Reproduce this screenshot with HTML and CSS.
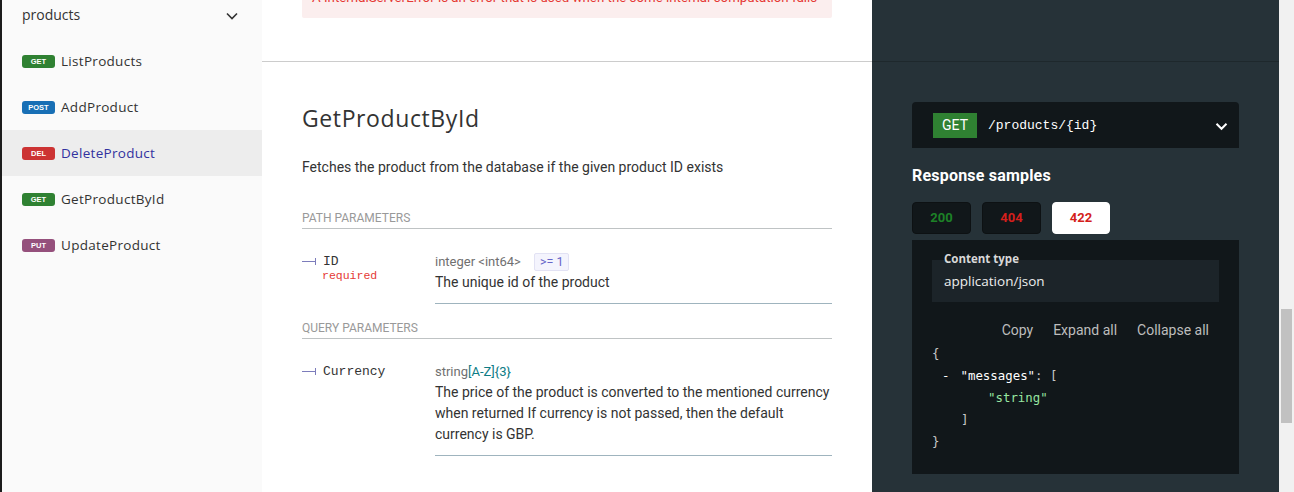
FILE: index.html
```html
<!DOCTYPE html>
<html lang="en">
<head>
<meta charset="utf-8">
<title>GetProductById</title>
<link rel="stylesheet" href="styles.css">
</head>
<body>
<div class="app">
  <nav class="sidebar">
    <div class="menu-cat">
      <span class="cat-label">products</span>
      <svg class="cat-chev" width="12" height="8" viewBox="0 0 12 8"><path d="M1 1.5 L6 6.5 L11 1.5" fill="none" stroke="#333" stroke-width="1.6"/></svg>
    </div>
    <ul class="menu">
      <li class="menu-item"><span class="badge get">get</span><span class="menu-label">ListProducts</span></li>
      <li class="menu-item"><span class="badge post">post</span><span class="menu-label">AddProduct</span></li>
      <li class="menu-item active"><span class="badge del">del</span><span class="menu-label">DeleteProduct</span></li>
      <li class="menu-item"><span class="badge get">get</span><span class="menu-label">GetProductById</span></li>
      <li class="menu-item"><span class="badge put">put</span><span class="menu-label">UpdateProduct</span></li>
    </ul>
  </nav>

  <main class="content">
    <section class="row row-prev">
      <div class="middle">
        <div class="error-box">A InternalServerError is an error that is used when the some internal computation fails</div>
      </div>
      <div class="right"></div>
    </section>

    <section class="row row-op">
      <div class="middle">
        <h2 class="op-title">GetProductById</h2>
        <p class="op-desc">Fetches the product from the database if the given product ID exists</p>

        <div class="params-header">Path Parameters</div>
        <div class="param">
          <div class="param-name">
            <div class="name-line"><span class="tree"></span><span class="pname">ID</span></div>
            <div class="required">required</div>
          </div>
          <div class="param-info">
            <div class="type-line"><span class="ptype">integer &lt;int64&gt;</span><span class="constraint">&gt;= 1</span></div>
            <div class="pdesc">The unique id of the product</div>
          </div>
        </div>

        <div class="params-header second">Query Parameters</div>
        <div class="param">
          <div class="param-name">
            <div class="name-line"><span class="tree"></span><span class="pname">Currency</span></div>
          </div>
          <div class="param-info">
            <div class="type-line"><span class="ptype">string</span><span class="pattern">[A-Z]{3}</span></div>
            <div class="pdesc">The price of the product is converted to the mentioned currency when returned If currency is not passed, then the default currency is GBP.</div>
          </div>
        </div>
      </div>

      <div class="right">
        <div class="endpoint">
          <span class="http-verb">GET</span>
          <span class="path">/products/{id}</span>
          <svg class="ep-chev" width="13" height="9" viewBox="0 0 13 9"><path d="M1.5 1.8 L6.5 6.8 L11.5 1.8" fill="none" stroke="#fff" stroke-width="2"/></svg>
        </div>
        <h3 class="samples-title">Response samples</h3>
        <div class="tabs">
          <span class="tab ok">200</span>
          <span class="tab err">404</span>
          <span class="tab err selected">422</span>
        </div>
        <div class="sample-panel">
          <div class="ctype">
            <div class="ctype-label">Content type</div>
            <div class="ctype-value">application/json</div>
          </div>
          <div class="actions">
            <span class="action">Copy</span>
            <span class="action">Expand all</span>
            <span class="action">Collapse all</span>
          </div>
          <div class="json">
            <div class="jl"><span class="punct">{</span></div>
            <div class="jl ind1"><span class="collapser">-</span><span class="key">"messages"</span><span class="punct">: [</span></div>
            <div class="jl ind2"><span class="str">"string"</span></div>
            <div class="jl ind3"><span class="punct">]</span></div>
            <div class="jl"><span class="punct">}</span></div>
          </div>
        </div>
      </div>
    </section>
  </main>

  <div class="scrollbar"><div class="thumb"></div></div>
</div>
</body>
</html>
```

FILE: styles.css
```css
* { box-sizing: border-box; }
html, body { margin: 0; padding: 0; }
body {
  width: 1294px;
  height: 492px;
  overflow: hidden;
  font-family: Roboto, "Liberation Sans", sans-serif;
  color: #333;
  background: #fff;
}
.app {
  display: flex;
  height: 492px;
}

/* Sidebar */
.sidebar {
  width: 262px;
  flex: none;
  background: #fafafa;
  border-left: 2px solid #1c1c1c;
  font-family: "Open Sans", sans-serif;
}
.menu-cat {
  height: 38px;
  display: flex;
  align-items: flex-start;
  justify-content: space-between;
  padding: 5px 24px 0 20px;
}
.cat-label {
  font-size: 14px;
  line-height: 20px;
  color: #333;
}
.cat-chev { margin-top: 7px; }
.menu { list-style: none; margin: 0; padding: 0; }
.menu-item {
  height: 46px;
  display: flex;
  align-items: center;
  padding-left: 20px;
}
.menu-item.active { background: #ededed; }
.menu-item.active .menu-label { color: #32329f; }
.badge {
  width: 33px;
  height: 13px;
  border-radius: 3px;
  color: #fff;
  font-family: "Liberation Sans", Arial, sans-serif;
  font-weight: bold;
  font-size: 7.5px;
  line-height: 13px;
  text-align: center;
  text-transform: uppercase;
  margin-right: 6px;
  margin-top: 1px;
}
.badge.get { background: #2f8132; }
.badge.post { background: #186fb5; }
.badge.del { background: #cc3333; }
.badge.put { background: #95507c; }
.menu-label {
  font-size: 13.5px;
  letter-spacing: 0.3px;
  line-height: 20px;
  color: #333;
}

/* Content */
.content {
  width: 1017px;
  flex: none;
  display: flex;
  flex-direction: column;
}
.row {
  display: grid;
  grid-template-columns: 610px 407px;
}
.row-prev {
  height: 62px;
}
.row-prev .middle,
.row-prev .right {
  border-bottom: 1px solid rgba(0, 0, 0, 0.2);
}
.row-op { flex: 1; }
.middle { padding: 0 40px; }
.right { background: #263238; padding: 0 40px; }
.row-prev .middle { overflow: hidden; }

.error-box {
  margin-top: -22px;
  padding: 10px 10px;
  background: #fbeeee;
  border-radius: 2px;
  color: #e53935;
  font-size: 13.3px;
  line-height: 20px;
  white-space: nowrap;
}

.row-op .middle { padding-top: 40px; }
.op-title {
  margin: 0;
  font-family: "Open Sans", sans-serif;
  font-weight: 400;
  font-size: 23px;
  letter-spacing: 0.6px;
  line-height: 32px;
  color: #333;
}
.op-desc {
  margin: 23px 0 0;
  font-size: 14px;
  line-height: 20px;
  color: #333;
}
.params-header {
  margin-top: 33px;
  font-size: 12px;
  line-height: 16px;
  text-transform: uppercase;
  color: #999;
  padding-bottom: 2px;
  border-bottom: 1px solid #bfc3c4;
}
.params-header.second { margin-top: 16px; }
.param {
  display: flex;
}
.param-name {
  width: 133px;
  flex: none;
  padding-top: 23px;
}
.name-line {
  display: flex;
  align-items: center;
  height: 18px;
}
.tree {
  position: relative;
  width: 14px;
  height: 1px;
  background: #7c7cbb;
  margin-right: 7px;
}
.tree::after {
  content: "";
  position: absolute;
  right: 0;
  top: -3px;
  width: 1px;
  height: 7px;
  background: #7c7cbb;
}
.pname {
  font-family: "Liberation Mono", monospace;
  font-size: 13px;
  color: #333;
}
.required {
  margin-left: 20px;
  font-family: "Liberation Mono", monospace;
  font-size: 11.5px;
  line-height: 12px;
  color: #e53935;
}
.param-info {
  flex: 1;
  padding: 23px 0 10px;
  border-bottom: 1px solid #9fb4be;
}
.type-line {
  font-size: 13px;
  line-height: 20px;
  display: flex;
  align-items: center;
}
.ptype { color: #707070; }
.constraint {
  margin-left: 13px;
  padding: 0 5px;
  line-height: 16px;
  background: #f4f4fd;
  border: 1px solid #e2e2f4;
  border-radius: 2px;
  color: #6666c9;
  font-size: 12.5px;
}
.pattern { color: #0e7c86; }
.pdesc {
  font-size: 14px;
  line-height: 21px;
  color: #333;
}

/* Right panel */
.row-op .right { padding-top: 40px; }
.endpoint {
  height: 46px;
  background: #11171a;
  border-radius: 4px 4px 0 0;
  display: flex;
  align-items: center;
  padding: 0 11px 0 21px;
}
.http-verb {
  background: #2f8132;
  color: #fff;
  font-size: 14px;
  line-height: 25px;
  padding: 0 9px;
  width: 44px;
  text-align: center;
}
.path {
  margin-left: 11px;
  font-family: "Liberation Mono", monospace;
  font-size: 13px;
  color: #fff;
  flex: 1;
}
.ep-chev { margin-top: 2px; }
.samples-title {
  margin: 18px 0 0;
  color: #fff;
  font-size: 16px;
  font-weight: bold;
  letter-spacing: 0.2px;
  line-height: 20px;
}
.tabs {
  display: flex;
  gap: 11px;
  margin-top: 16px;
}
.tab {
  width: 59px;
  height: 32px;
  border-radius: 4px;
  background: #11171a;
  border: 1px solid #0d1113;
  font-size: 13px;
  font-weight: bold;
  line-height: 30px;
  text-align: center;
}
.tab.ok { color: #1d8127; }
.tab.err { color: #d41f1c; }
.tab.selected { background: #fff; color: #d41f1c; border-color: #fff; width: 58px; }
.sample-panel {
  margin-top: 6px;
  background: #11171a;
  padding: 20px 20px 21px;
}
.ctype {
  background: #1c2429;
  padding: 0 12px 11px;
  margin-top: 0;
  height: 42px;
}
.ctype-label {
  position: relative;
  top: -9px;
  font-family: "Open Sans", sans-serif;
  font-weight: bold;
  font-size: 11.5px;
  line-height: 16px;
  color: #d8d8d8;
  height: 16px;
}
.ctype-value {
  margin-top: -5px;
  font-family: "Open Sans", sans-serif;
  font-size: 13.5px;
  line-height: 20px;
  color: #eee;
}
.actions {
  margin-top: 18px;
  display: flex;
  justify-content: flex-end;
}
.action {
  padding: 0 10px;
  font-size: 14px;
  line-height: 20px;
  color: #bdbdbd;
}
.json {
  margin-top: 3px;
  font-family: "DejaVu Sans Mono", monospace;
  font-size: 12.4px;
  color: #fff;
}
.jl { line-height: 22px; height: 22px; white-space: pre; }
.ind1 { padding-left: 10px; }
.ind2 { padding-left: 56px; }
.ind3 { padding-left: 29px; }
.collapser { margin-right: 11px; }
.punct { color: #c8c8c8; }
.key { color: #fff; }
.str { color: #97e6a0; }

/* Scrollbar */
.scrollbar {
  width: 15px;
  flex: none;
  background: #f1f1f1;
  padding: 309px 2px 0;
}
.thumb {
  height: 114px;
  background: #c1c1c1;
}
```
